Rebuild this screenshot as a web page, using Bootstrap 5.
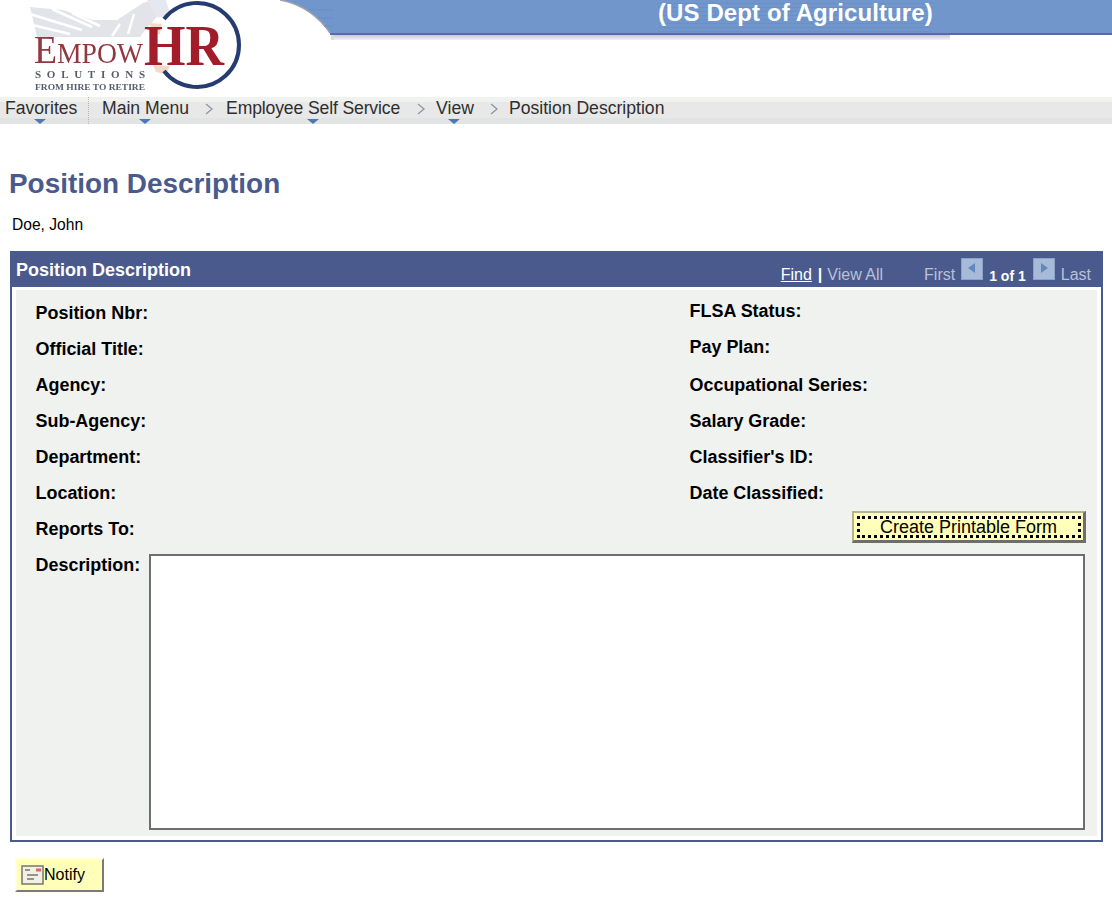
<!DOCTYPE html>
<html lang="en"><head><meta charset="utf-8"><title>Position Description</title>
<link href="https://cdn.jsdelivr.net/npm/bootstrap@5.3.0/dist/css/bootstrap.min.css" rel="stylesheet">
<style>
body{font-family:"Liberation Sans",Arial,sans-serif;background:#fff;color:#000;width:1112px;height:901px;overflow:hidden}
.hdr{height:97px}
.logo-box{width:278px;flex:none}
.band-curve{width:56px;height:40px;flex:none;display:block}
.band{height:35px;background:#7096cc;border-bottom:2px solid #5c69a8;padding-right:180px}
.band-shade{height:5px;margin-right:162px;background:linear-gradient(#c9c9c9,#f2f2f2)}
.band-title{font-size:24px;letter-spacing:.1px;font-weight:700;line-height:26px;color:#fff;width:274px;height:33px;background:repeating-linear-gradient(#7096cc 0 3px,#6a90c7 3px 4px)}
.crumbs{height:27px;background:linear-gradient(#f0f2f0 0 5px,#e8e8e8 5px 21px,#e2e3e3 21px);color:#2e2e2e;line-height:22px}
.crumb{position:relative;white-space:nowrap;font-size:17.6px;height:27px}
.crumb.has-menu::after{content:"";position:absolute;left:var(--tip);top:22px;border:6px solid transparent;border-top:5px solid #4a7ab5;border-bottom:0}
.c1{margin-left:5px;width:84px;border-right:1px dotted #b5b5b5}
.c2{margin-left:13px}
.c3{margin:0 1px 0 2px;letter-spacing:-.14px}
.sep{width:10px;height:27px;flex:none;margin:0 10px 0 15px;display:block}
.page-title{font-size:27.9px;font-weight:700;color:#4a5a8c;line-height:32px;margin:44px 0 0 9px}
.person{font-size:15.6px;line-height:20px;margin:15px 0 0 12px}
.panel{margin:16px 9px 0 10px;border:2px solid #4a5a8c;height:591px}
.panel-head{height:34px;background:#4a5a8c;color:#fff;padding:0 10px 0 4px}
.panel-name{font-size:18px;font-weight:700;line-height:34px}
.panel-tools{font-size:16px;color:#b9c1d6;line-height:20px;padding-top:12px}
.panel-tools a{color:#fff;text-decoration:underline}
.bar{color:#fff;font-weight:700;margin:0 5px 0 6px}
.pager-lbl{margin-left:41px}
.arrow-ico{width:22px;height:22px;display:block;margin:-7px 6px 0 6px}
.count{font-size:14px;font-weight:700;color:#fff;padding-top:1px;margin-right:1px}
.panel-body{margin:3px 4px 4px;background:#f0f2f0;height:546px;padding:5px 12px 0 19.500px}
.lab{font-size:17.950px;font-weight:700;line-height:36px;height:36px;white-space:nowrap}
.fields{height:258px}
.col-l{width:654px;flex:none}
.lab.up{line-height:32px}
.print-btn{display:block;margin:0 -1px 0 auto;width:234px;height:32px;background:#ffffb9;border-style:solid;border-width:2px 3px 3px 2px;border-color:#b4b48c #6e6e6e #6e6e6e #b4b48c;outline:3px dotted #000;outline-offset:-8px;font-size:18px;line-height:24px;padding:0;color:#000;border-radius:0}
.desc-row{margin-top:2px}
.desc-lab{width:113.500px;flex:none;line-height:22px;height:22px;margin-top:-1px}
.desc-box{width:936px;height:276px;border:2px solid #6e6e6e;background:#fff;resize:none;border-radius:0;display:block;margin-top:-1px}
.notify{margin:16px 0 0 15px;width:89px;height:34px;background:#ffffb9;border:2px solid;border-color:#ffffd8 #7a7a7a #7a7a7a #ffffd8;font-size:16px;line-height:26px;padding:0 0 0 4px;border-radius:0;color:#000}
.notify svg{display:block;flex:none}
</style></head><body>
<header class="hdr d-flex">
 <div class="logo-box">
  <svg width="278" height="97" viewBox="0 0 278 97" role="img" aria-label="EmpowHR Solutions logo">
   <defs><filter id="soft" x="-5%" y="-5%" width="110%" height="110%"><feGaussianBlur stdDeviation="0.4"/></filter></defs>
   <g filter="url(#soft)">
    <path d="M30 7 L63 10 L93 20 L117 20 L143 3 L153 0 L160 13 L143 33 L140 37 L37 37 Z" fill="#e2e4ea"/>
    <path d="M28 24 L70 34 M30 14 L82 30 M52 9 L92 27 M72 13 L100 26 M120 24 L112 36 M134 14 L128 34" stroke="#fff" stroke-width="2.500" fill="none"/>
    <path d="M147 0 H166 L170 14 L158 18 Z" fill="#e5e8ee"/>
    <path d="M150 23 L162 24 L160 34 L152 34 Z M153 65 L170 66 L166 74 L156 72 Z" fill="#f4d9c8"/>
    <path d="M164 19 A42 42 0 1 1 164 71" fill="none" stroke="#253a70" stroke-width="4"/>
    <text x="34" y="63" font-family="Liberation Serif" font-size="30" fill="#92373f" textLength="109" lengthAdjust="spacingAndGlyphs"><tspan font-size="41">E</tspan>MPOW</text>
    <text x="144" y="65" font-family="Liberation Serif" font-size="57" font-weight="700" fill="#a31f2a" textLength="80" lengthAdjust="spacingAndGlyphs">HR</text>
    <text x="35" y="78" font-family="Liberation Serif" font-size="11" font-weight="700" fill="#555d6a" textLength="110">SOLUTIONS</text>
    <text x="35" y="90" font-family="Liberation Serif" font-size="8.500" font-weight="700" fill="#555d70" textLength="110" lengthAdjust="spacingAndGlyphs">FROM HIRE TO RETIRE</text>
   </g>
  </svg>
 </div>
 <svg class="band-curve" viewBox="0 0 56 40"><path d="M2 0 C25 4 42 18 52 33 H56 V0 Z" fill="#7096cc"/><path d="M2 0 C25 4 42 18 52 33" fill="none" stroke="#a3a3a3" stroke-width="1.500"/><path d="M30 10 H56 M40 18 H56 M46 26 H56" stroke="#668dc5"/><rect x="52" y="33" width="4" height="2" fill="#5c69a8"/><rect x="53" y="35" width="3" height="5" fill="#dcdcdc"/></svg>
 <div class="flex-grow-1">
  <div class="band d-flex justify-content-end"><div class="band-title text-nowrap">(US Dept of Agriculture)</div></div>
  <div class="band-shade"></div>
 </div>
</header>
<nav class="crumbs d-flex" aria-label="breadcrumb">
 <div class="crumb has-menu c1" style="--tip:29px">Favorites</div>
 <div class="crumb has-menu c2" style="--tip:37px">Main Menu</div>
 <svg class="sep" viewBox="0 0 10 27"><path d="M2 7 L8 12 L2 17" fill="none" stroke="#8c96a8" stroke-width="1.300"/></svg>
 <div class="crumb has-menu c3" style="--tip:81px">Employee Self Service</div>
 <svg class="sep" viewBox="0 0 10 27"><path d="M2 7 L8 12 L2 17" fill="none" stroke="#8c96a8" stroke-width="1.300"/></svg>
 <div class="crumb has-menu" style="--tip:12px">View</div>
 <svg class="sep" viewBox="0 0 10 27"><path d="M2 7 L8 12 L2 17" fill="none" stroke="#8c96a8" stroke-width="1.300"/></svg>
 <div class="crumb">Position Description</div>
</nav>
<h1 class="page-title">Position Description</h1>
<div class="person">Doe, John</div>
<section class="panel">
 <div class="panel-head d-flex justify-content-between">
  <div class="panel-name">Position Description</div>
  <div class="panel-tools d-flex">
   <a href="#">Find</a><span class="bar">|</span><span>View All</span>
   <span class="pager-lbl">First</span>
   <svg class="arrow-ico" viewBox="0 0 22 22"><rect width="22" height="22" fill="#8ba3c8"/><rect x="1" y="1" width="20" height="20" fill="#a7bbd8"/><path d="M14 5 V15 L7 10 Z" fill="#6189bd"/></svg>
   <span class="count">1 of 1</span>
   <svg class="arrow-ico" viewBox="0 0 22 22"><rect width="22" height="22" fill="#8ba3c8"/><rect x="1" y="1" width="20" height="20" fill="#a7bbd8"/><path d="M8 5 V15 L15 10 Z" fill="#6189bd"/></svg>
   <span>Last</span>
  </div>
 </div>
 <div class="panel-body">
  <div class="fields d-flex">
   <div class="col-l">
    <div class="lab">Position Nbr:</div><div class="lab">Official Title:</div><div class="lab">Agency:</div><div class="lab">Sub-Agency:</div><div class="lab">Department:</div><div class="lab">Location:</div><div class="lab">Reports To:</div>
   </div>
   <div class="flex-grow-1">
    <div class="lab up">FLSA Status:</div><div class="lab up">Pay Plan:</div><div class="lab">Occupational Series:</div><div class="lab">Salary Grade:</div><div class="lab">Classifier's ID:</div><div class="lab">Date Classified:</div>
    <button type="button" class="print-btn">Create Printable Form</button>
   </div>
  </div>
  <div class="desc-row d-flex">
   <div class="lab desc-lab">Description:</div>
   <textarea class="desc-box" aria-label="Description"></textarea>
  </div>
 </div>
</section>
<button type="button" class="notify d-flex align-items-center">
 <svg width="23" height="20" viewBox="0 0 23 20"><rect x="1" y="1" width="21" height="18" fill="#f2efe4" stroke="#77776f" stroke-width="1.500"/><path d="M4 5 H9 M6 10 H17 M6 14 H13" stroke="#77776f" stroke-width="1.500"/><rect x="15" y="3.500" width="5" height="3" fill="#d06a70"/></svg>Notify
</button>
</body></html>
